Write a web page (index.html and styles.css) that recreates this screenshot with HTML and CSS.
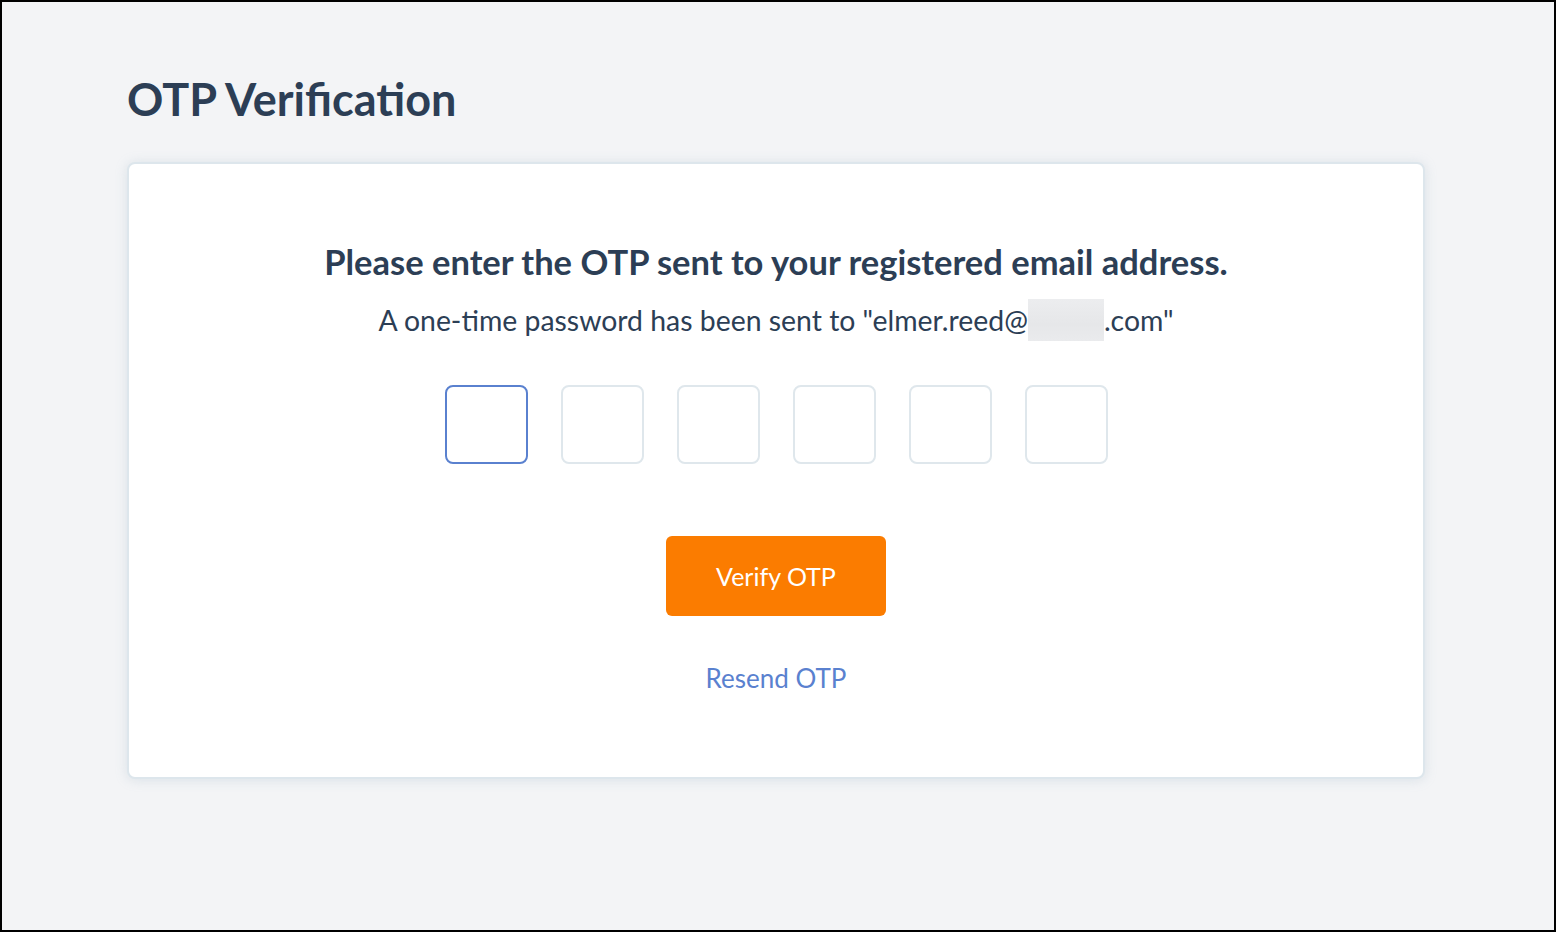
FILE: index.html
```html
<!DOCTYPE html>
<html lang="en">
<head>
<meta charset="utf-8">
<title>OTP Verification</title>
<link rel="stylesheet" href="styles.css">
</head>
<body>
<main class="page">
  <h1 class="title">OTP Verification</h1>
  <section class="card">
    <h2 class="heading">Please enter the OTP sent to your registered email address.</h2>
    <p class="sub">A one-time password has been sent to "elmer.reed@<span class="blur"></span>.com"</p>
    <div class="otp">
      <input class="digit focused" type="text" maxlength="1">
      <input class="digit" type="text" maxlength="1">
      <input class="digit" type="text" maxlength="1">
      <input class="digit" type="text" maxlength="1">
      <input class="digit" type="text" maxlength="1">
      <input class="digit" type="text" maxlength="1">
    </div>
    <button class="verify" type="button">Verify OTP</button>
    <a class="resend" href="#">Resend OTP</a>
  </section>
</main>
</body>
</html>
```
FILE: styles.css
```css
html, body {
  margin: 0;
  padding: 0;
}
body {
  box-sizing: border-box;
  height: 932px;
  border: 2px solid #000;
  background: #f3f4f6;
  font-family: "Lato", "Liberation Sans", sans-serif;
  color: #2c3e55;
  overflow: hidden;
}
.page {
  padding: 69px 0 0 125px;
}
.title {
  margin: 0;
  font-size: 45px;
  line-height: 56px;
  font-weight: 700;
  color: #2c3e55;
}
.card {
  margin-top: 35px;
  width: 1298px;
  height: 617px;
  box-sizing: border-box;
  border: 2px solid #dde6ec;
  border-radius: 8px;
  background: #fff;
  box-shadow: 0 1px 12px rgba(150, 175, 195, 0.28);
  padding-top: 78px;
  display: flex;
  flex-direction: column;
  align-items: center;
}
.heading {
  margin: 0;
  font-size: 34.5px;
  line-height: 40px;
  font-weight: 700;
}
.sub {
  margin: 20px 0 0;
  font-size: 28.4px;
  line-height: 36px;
  font-weight: 400;
}
.blur {
  display: inline-block;
  width: 76px;
  height: 42px;
  margin: -3px 0;
  vertical-align: top;
  background: linear-gradient(180deg, #ecedef 0%, #e6e7e9 60%, #eaebed 100%);
}
.otp {
  margin-top: 47px;
  display: flex;
  gap: 33px;
}
.digit {
  width: 83px;
  height: 79px;
  box-sizing: border-box;
  border: 2px solid #dfe7ec;
  border-radius: 8px;
  background: #fff;
  outline: none;
  padding: 0;
  font-size: 32px;
  text-align: center;
}
.digit.focused {
  border-color: #5a81cf;
}
.verify {
  margin-top: 72px;
  width: 220px;
  height: 80px;
  border: 0;
  border-radius: 6px;
  background: #fb7c00;
  color: #fff;
  font-family: inherit;
  font-size: 25px;
  font-weight: 400;
}
.resend {
  margin-top: 44px;
  font-size: 26px;
  line-height: 36px;
  color: #5a81cf;
  text-decoration: none;
}
```
